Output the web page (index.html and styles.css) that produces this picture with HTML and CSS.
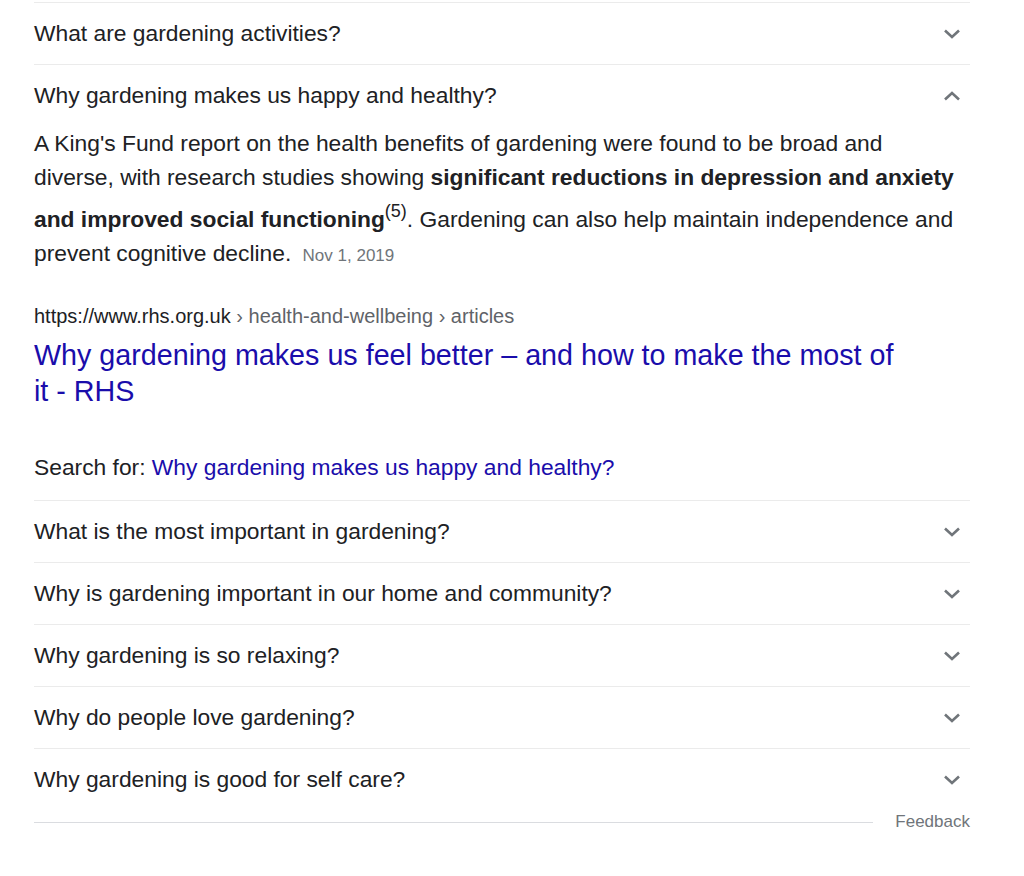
FILE: index.html
```html
<!DOCTYPE html>
<html lang="en">
<head>
<meta charset="UTF-8" />
<title>People also ask</title>
<link rel="stylesheet" href="styles.css">
</head>
<body>
<div class="paa">
  <div class="question">
    <span>What are gardening activities?</span>
    <svg class="chev" width="18" height="10" viewBox="0 0 18 10"><path d="M2 1.5L9 8l7-6.5"/></svg>
  </div>

  <div class="item open">
    <div class="question">
      <span>Why gardening makes us happy and healthy?</span>
      <svg class="chev" width="18" height="10" viewBox="0 0 18 10"><path d="M2 8.5L9 2l7 6.5"/></svg>
    </div>
    <div class="answer">
      A King's Fund report on the health benefits of gardening were found to be broad and diverse, with research studies showing <b>significant reductions in depression and anxiety and improved social functioning</b><sup>(5)</sup>. Gardening can also help maintain independence and prevent cognitive decline. <span class="date">Nov 1, 2019</span>
    </div>
    <div class="source">
      <div class="cite">https://www.rhs.org.uk<span class="crumbs"> › health-and-wellbeing › articles</span></div>
      <a class="title" href="#">Why gardening makes us feel better – and how to make the most of it - RHS</a>
    </div>
    <div class="search-for">Search for: <a href="#">Why gardening makes us happy and healthy?</a></div>
  </div>

  <div class="question">
    <span>What is the most important in gardening?</span>
    <svg class="chev" width="18" height="10" viewBox="0 0 18 10"><path d="M2 1.5L9 8l7-6.5"/></svg>
  </div>
  <div class="question">
    <span>Why is gardening important in our home and community?</span>
    <svg class="chev" width="18" height="10" viewBox="0 0 18 10"><path d="M2 1.5L9 8l7-6.5"/></svg>
  </div>
  <div class="question">
    <span>Why gardening is so relaxing?</span>
    <svg class="chev" width="18" height="10" viewBox="0 0 18 10"><path d="M2 1.5L9 8l7-6.5"/></svg>
  </div>
  <div class="question">
    <span>Why do people love gardening?</span>
    <svg class="chev" width="18" height="10" viewBox="0 0 18 10"><path d="M2 1.5L9 8l7-6.5"/></svg>
  </div>
  <div class="question">
    <span>Why gardening is good for self care?</span>
    <svg class="chev" width="18" height="10" viewBox="0 0 18 10"><path d="M2 1.5L9 8l7-6.5"/></svg>
  </div>

  <div class="feedback">
    <div class="rule"></div>
    <span>Feedback</span>
  </div>
</div>
</body>
</html>
```

FILE: styles.css
```css
/* base */
body {
  margin: 0;
  background: #fff;
  font-family: 'Liberation Sans', Arial, sans-serif;
  color: #202124;
}

.paa {
  width: 936px;
  margin-left: 34px;
  padding-top: 2px;
}

/* question rows */
.question {
  display: flex;
  align-items: center;
  justify-content: space-between;
  height: 61px;
  border-top: 1px solid #ebebeb;
  font-size: 22.8px;
}
.chev {
  fill: none;
  stroke: #70757a;
  stroke-width: 2.6;
  margin-right: 9px;
}
.item {
  border-top: 1px solid #ebebeb;
}
.item > .question {
  border-top: none;
}

/* expanded answer */
.answer {
  max-width: 930px;
  font-size: 22.8px;
  line-height: 34px;
}
.answer b {
  font-weight: 700;
}
.answer sup {
  font-size: 18px;
  vertical-align: 10px;
}
.date {
  font-size: 17px;
  color: #70757a;
  margin-left: 5px;
}

.source {
  margin-top: 30px;
}
.cite {
  font-size: 20px;
  line-height: 26px;
  color: #202124;
}
.crumbs {
  color: #5f6368;
}
.title {
  display: block;
  max-width: 872px;
  margin-top: 8px;
  font-size: 28.7px;
  line-height: 36px;
  color: #1a0dab;
  text-decoration: none;
}

.search-for {
  margin-top: 43px;
  padding-bottom: 18px;
  font-size: 22.8px;
  line-height: 30px;
}
.search-for a {
  color: #1a0dab;
  text-decoration: none;
}

/* feedback */
.feedback {
  display: flex;
  align-items: center;
  gap: 22px;
  height: 24px;
}
.feedback .rule {
  flex: 1;
  border-top: 1px solid #dadce0;
}
.feedback span {
  font-size: 17px;
  color: #70757a;
}
```
